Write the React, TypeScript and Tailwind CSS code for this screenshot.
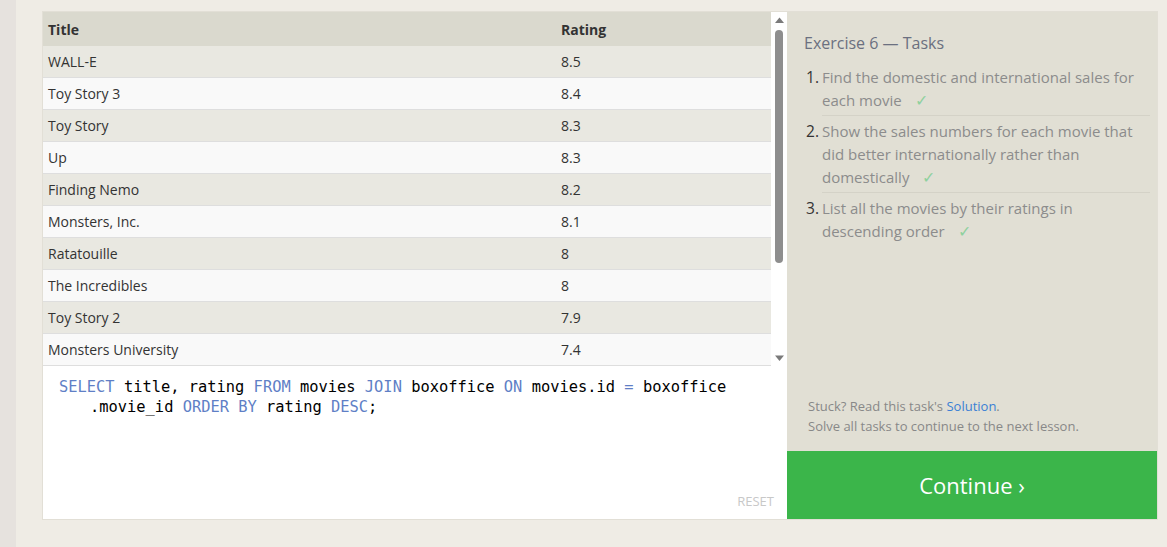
const rows = [
  ["WALL-E", "8.5"],
  ["Toy Story 3", "8.4"],
  ["Toy Story", "8.3"],
  ["Up", "8.3"],
  ["Finding Nemo", "8.2"],
  ["Monsters, Inc.", "8.1"],
  ["Ratatouille", "8"],
  ["The Incredibles", "8"],
  ["Toy Story 2", "7.9"],
  ["Monsters University", "7.4"],
];

const tasks = [
  ["Find the domestic and international sales for", "each movie"],
  ["Show the sales numbers for each movie that", "did better internationally rather than", "domestically"],
  ["List all the movies by their ratings in", "descending order"],
];

function Check() {
  return <span className="ml-[13px] text-[16px] text-[#8fd19e]">✓</span>;
}

function Scrollbar() {
  return (
    <div className="w-4 bg-white flex flex-col items-center">
      <svg width="11" height="8" viewBox="0 0 11 8" className="mt-[4px]">
        <path d="M1 7 L5.5 1.5 L10 7 Z" fill="#7a7a7a" />
      </svg>
      <div className="mt-[6px] w-2 h-[233px] rounded-full bg-[#8e8e8e]" />
      <div className="flex-1" />
      <svg width="11" height="8" viewBox="0 0 11 8" className="mb-[4px]">
        <path d="M1 1.5 L5.5 7 L10 1.5 Z" fill="#7a7a7a" />
      </svg>
    </div>
  );
}

function K({ children }: { children: React.ReactNode }) {
  return <span className="text-[#5f7fc6]">{children}</span>;
}

export default function App() {
  return (
    <div className="w-[1167px] h-[547px] flex bg-[#efece5] font-['Open_Sans',sans-serif] overflow-hidden">
      <div className="w-4 bg-[#e6e2de]" />
      <div className="flex-1 pl-[26px] pr-[9px] pt-[11px]">
        <div className="flex h-[509px] border border-[#e2dfd6]">
          <div className="w-[744px] flex flex-col">
            <div className="flex h-[354px]">
              <div className="flex-1 flex flex-col text-[14px] text-[#333]">
                <div className="h-[34px] flex items-center bg-[#dad9ce] font-bold">
                  <div className="w-[518px] pl-[5px]">Title</div>
                  <div>Rating</div>
                </div>
                {rows.map(([t, r], i) => (
                  <div
                    key={t}
                    className={`h-[32px] flex items-center border-b border-[#dedede] ${
                      i % 2 === 0 ? "bg-[#e9e8e1]" : "bg-[#f9f9f9]"
                    }`}
                  >
                    <div className="w-[518px] pl-[5px]">{t}</div>
                    <div>{r}</div>
                  </div>
                ))}
              </div>
              <Scrollbar />
            </div>
            <div className="flex-1 bg-white flex flex-col pl-4 pr-[13px] pt-[11px] pb-[8px] font-['DejaVu_Sans_Mono',monospace] text-[15.4px] leading-[20px] text-black">
              <div>
                <K>SELECT</K> title, rating <K>FROM</K> movies <K>JOIN</K> boxoffice <K>ON</K> movies.id{" "}
                <K>=</K> boxoffice
              </div>
              <div className="pl-[31px]">
                .movie_id <K>ORDER BY</K> rating <K>DESC</K>;
              </div>
              <div className="flex-1" />
              <div className="self-end font-['Open_Sans',sans-serif] text-[13px] text-[#c8c8c8]">RESET</div>
            </div>
          </div>
          <div className="flex-1 flex flex-col">
            <div className="flex-1 bg-[#e1dfd4] flex flex-col pl-[17px] pr-[7px] pt-[20px] pb-[15px]">
              <div className="text-[16px] text-[#6b7080] leading-[22px]">Exercise 6 — Tasks</div>
              <ol className="mt-[8px] text-[15px] leading-[23px] text-[#8c8c8c]">
                {tasks.map((lines, i) => (
                  <li key={i} className="flex">
                    <span className="w-[18px] pl-[2px] pt-[4px] text-[15.5px] text-[#333]">{i + 1}.</span>
                    <div
                      className={`flex-1 flex flex-col pt-[4px] pb-[3px] ${
                        i < tasks.length - 1 ? "border-b border-[#d4d2c7]" : ""
                      }`}
                    >
                      {lines.map((l, j) => (
                        <span key={j}>
                          {l}
                          {j === lines.length - 1 && <Check />}
                        </span>
                      ))}
                    </div>
                  </li>
                ))}
              </ol>
              <div className="flex-1" />
              <div className="pl-[4px] text-[13px] leading-[20px] text-[#888]">
                <div>
                  Stuck? Read this task's <span className="text-[#3a7fd5]">Solution</span>.
                </div>
                <div>Solve all tasks to continue to the next lesson.</div>
              </div>
            </div>
            <div className="h-[68px] bg-[#3bb54a] flex items-center justify-center text-white text-[22px]">
              Continue ›
            </div>
          </div>
        </div>
      </div>
    </div>
  );
}
